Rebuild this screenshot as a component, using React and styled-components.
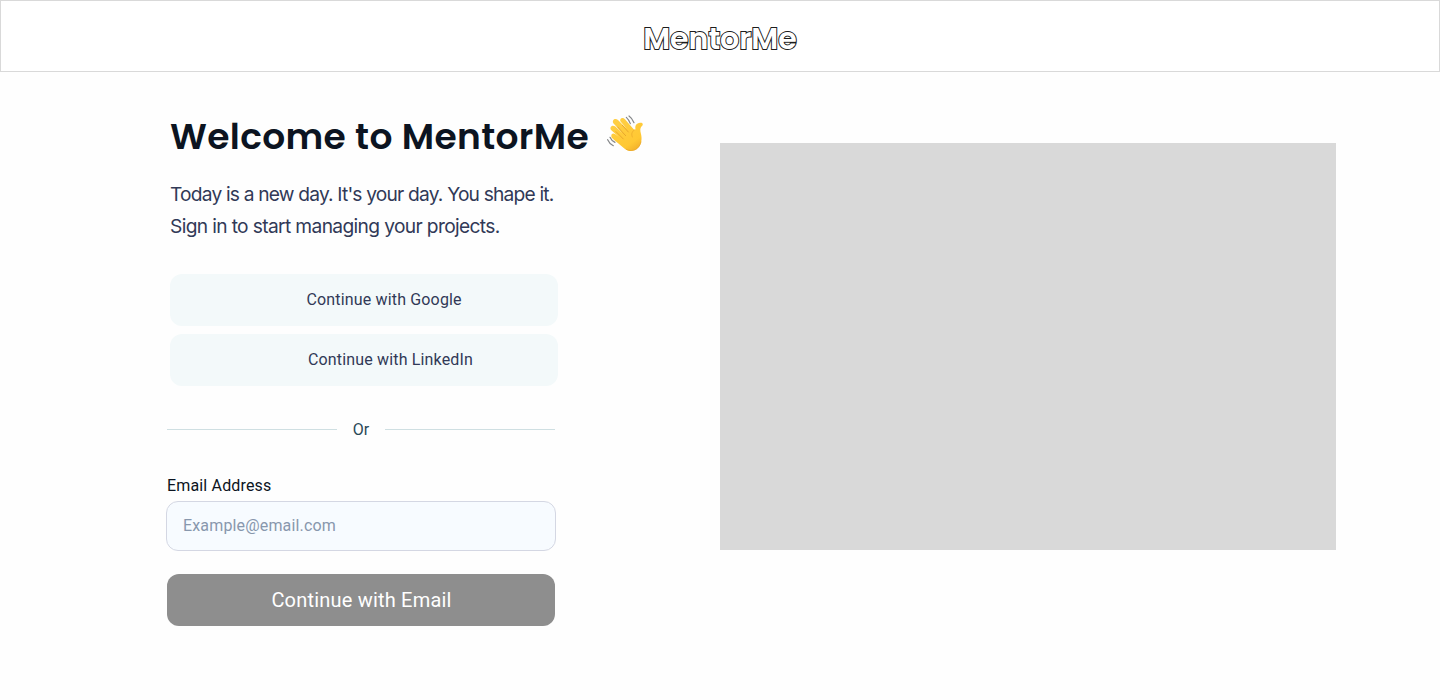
import React from 'react';
import styled, { createGlobalStyle } from 'styled-components';

const GlobalStyle = createGlobalStyle`
  *, *::before, *::after { box-sizing: border-box; }
  body { margin: 0; background: #fefefe; font-family: Roboto, "Liberation Sans", sans-serif; }
`;

const Page = styled.div`
  min-height: 700px;
  overflow: hidden;
`;

const Header = styled.header`
  display: flex;
  justify-content: center;
  height: 72px;
  padding-top: 15px;
  border: 1px solid #d9d9d9;
  background: #fff;
`;

const Logo = styled.svg`
  width: 160px;
  height: 44px;
  font-family: Poppins, Inter, sans-serif;
  font-size: 30px;
  font-weight: 600;
`;

const Main = styled.main`
  display: flex;
  align-items: flex-start;
`;

const FormColumn = styled.section`
  display: flex;
  flex-direction: column;
  width: 553px;
  margin-left: 167px;
  padding-top: 42px;
`;

const Intro = styled.div`
  padding-left: 3px;
`;

const TitleRow = styled.div`
  display: flex;
  align-items: flex-start;
  height: 44px;
`;

const Title = styled.h1`
  width: 436px;
  margin: 0;
  color: #0c1421;
  font: 600 36px/46px Poppins, Inter, sans-serif;
  letter-spacing: 0.36px;
  white-space: nowrap;
`;

const Wave = styled.svg`
  flex: none;
  width: 38px;
  height: 38px;
`;

const Subtitle = styled.p`
  margin: 20px 0 0;
  color: #313957;
  font: 400 19.2px/32px Inter, sans-serif;
  white-space: nowrap;
`;

const SubtitleLine = styled.span`
  display: block;
  letter-spacing: ${({ $tracking }) => $tracking}px;
`;

const Providers = styled.div`
  display: flex;
  flex-direction: column;
  gap: 8px;
  margin: 32px 0 0 3px;
`;

const ProviderButton = styled.button`
  width: 388px;
  height: 52px;
  padding: 0 0 0 ${({ $indent }) => $indent}px;
  border: 0;
  border-radius: 12px;
  background: #f3f9fa;
  color: #313957;
  font: 400 16px/16px Roboto, sans-serif;
  letter-spacing: 0.16px;
  text-align: left;
`;

const Divider = styled.div`
  display: flex;
  align-items: center;
  gap: 16px;
  width: 388px;
  height: 16px;
  margin-top: 36px;
  color: #294957;
  font-size: 16px;
  line-height: 16px;
  letter-spacing: 0.16px;

  &::before, &::after {
    content: '';
    flex: 1;
    height: 1px;
    margin-bottom: 2px;
    background: #cfdfe2;
  }
`;

const Label = styled.label`
  margin-top: 40px;
  color: #0c1421;
  font-size: 16px;
  line-height: 16px;
  letter-spacing: 0.16px;
`;

const EmailInput = styled.input`
  width: 390px;
  height: 50px;
  margin: 7px 0 0 -1px;
  padding: 0 16px 2px;
  border: 1px solid #d4d7e3;
  border-radius: 12px;
  background: #f7fbff;
  font: 400 16px/16px Roboto, sans-serif;
  letter-spacing: 0.16px;
  outline: none;

  &::placeholder { color: #8897ad; opacity: 1; }
`;

const SubmitButton = styled.button`
  width: 388px;
  height: 52px;
  margin-top: 23px;
  padding: 0 0 0 1px;
  border: 0;
  border-radius: 12px;
  background: #8e8e8e;
  color: #fff;
  font: 400 20px/20px Roboto, sans-serif;
  letter-spacing: 0.2px;
`;

const Artwork = styled.div`
  width: 616px;
  height: 407px;
  margin-top: 71px;
  background: #d9d9d9;
`;

function WavingHand() {
  return (
    <Wave viewBox="48 42 114 114" role="img" aria-label="Waving hand">
      <defs>
        <linearGradient id="skin" x1="70" y1="60" x2="132" y2="150" gradientUnits="userSpaceOnUse">
          <stop offset="0" stopColor="#ffcf45" />
          <stop offset="0.8" stopColor="#ffc833" />
          <stop offset="1" stopColor="#f4b42c" />
        </linearGradient>
      </defs>
      <path
        d="M64 108C63 101 70 98 76 103L86 110L64 91C57 82 66 73 75 79L98 100L70 70C65 60 75 52 84 60L110 86L91 64C88 55 98 50 105 58L131 88C135 91 137 89 136 84C135 74 142 69 150 68C159 67 161 74 155 79C150 84 150 91 153 102C157 117 154 135 143 145C132 155 116 156 104 146C91 136 77 124 67 115C64 112 64 110 64 108Z"
        fill="url(#skin)"
      />
      <path
        d="M97 76L115 96M83 81L107 107M78 95L100 117"
        fill="none" stroke="#e3a02a" strokeWidth="2.6" strokeLinecap="round"
      />
      <path
        d="M133 90C126 94 123 102 127 111M109 148C130 158 148 147 153 126"
        fill="none" stroke="#e9a62b" strokeWidth="2" strokeLinecap="round"
      />
      <path
        d="M109 52Q117 59 121 71M117 48Q127 55 132 68M60 112Q64 122 75 127M53 119Q58 131 70 137"
        fill="none" stroke="#86888a" strokeWidth="3.6" strokeLinecap="round"
      />
    </Wave>
  );
}

export default function App() {
  return (
    <Page>
      <GlobalStyle />
      <Header>
        <Logo viewBox="0 0 160 44" aria-label="MentorMe">
          <text x="80" y="33" textAnchor="middle" fill="#fff" stroke="#1c1c1c" strokeWidth="2" paintOrder="stroke">MentorMe</text>
        </Logo>
      </Header>
      <Main>
        <FormColumn>
          <Intro>
            <TitleRow>
              <Title>Welcome to MentorMe</Title>
              <WavingHand />
            </TitleRow>
            <Subtitle>
              <SubtitleLine $tracking={-0.81}>Today is a new day. It's your day. You shape it.</SubtitleLine>
              <SubtitleLine $tracking={-0.645}>Sign in to start managing your projects.</SubtitleLine>
            </Subtitle>
          </Intro>
          <Providers>
            <ProviderButton $indent={136.5}>Continue with Google</ProviderButton>
            <ProviderButton $indent={138}>Continue with LinkedIn</ProviderButton>
          </Providers>
          <Divider>Or</Divider>
          <Label htmlFor="email">Email Address</Label>
          <EmailInput id="email" type="email" placeholder="Example@email.com" />
          <SubmitButton>Continue with Email</SubmitButton>
        </FormColumn>
        <Artwork />
      </Main>
    </Page>
  );
}
